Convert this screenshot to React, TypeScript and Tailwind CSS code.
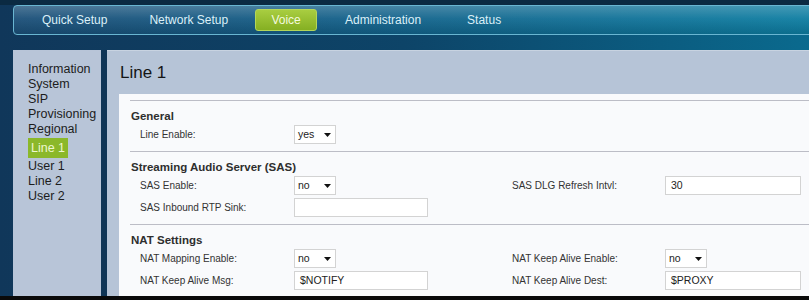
import type { ReactNode } from "react";

const sideItems = ["Information", "System", "SIP", "Provisioning", "Regional", "Line 1", "User 1", "Line 2", "User 2"];

export default function App() {
  return (
    <div className="h-[300px] w-[809px] overflow-hidden bg-[#0a0a0a] font-['Liberation_Sans',Arial,sans-serif]">
      <div className="flex h-[296px] flex-col bg-[linear-gradient(to_right,#10375a_0%,#0d4468_50%,#0a6a8e_100%)]">
        <div className="h-[5px] bg-[#0b2a42]" />
        <TopNav />
        <div className="h-[15px]" />
        <div className="flex min-h-0 flex-1">
          <Sidebar />
          <div className="w-[6px] bg-[#0f3556]" />
          <div className="flex min-w-0 flex-1 flex-col bg-[#b6c4d7]">
            <div className="h-[44px] border-t border-[#c8d3e1] pl-[13px] pt-[12px] text-[17px] leading-[20px] text-[#151515]">Line 1</div>
            <div className="ml-[12px] flex-1 bg-[#f9fafc] pl-[11px]">
              <div className="h-[6px]" />
              <Section title="General">
                <Row label="Line Enable:" field={<Select value="yes" />} />
              </Section>
              <Section title="Streaming Audio Server (SAS)">
                <Row label="SAS Enable:" field={<Select value="no" />} rightLabel="SAS DLG Refresh Intvl:" rightField={<Input wide value="30" />} />
                <Row label="SAS Inbound RTP Sink:" field={<Input value="" />} />
              </Section>
              <Section title="NAT Settings" last>
                <Row label="NAT Mapping Enable:" field={<Select value="no" />} rightLabel="NAT Keep Alive Enable:" rightField={<Select value="no" />} />
                <Row label="NAT Keep Alive Msg:" field={<Input value="$NOTIFY" />} rightLabel="NAT Keep Alive Dest:" rightField={<Input wide value="$PROXY" />} />
              </Section>
            </div>
          </div>
        </div>
      </div>
    </div>
  );
}

function TopNav() {
  return (
    <div className="-mr-[10px] ml-[13px] flex h-[30px] items-center rounded-[4px] border border-[#69b6d2] bg-[linear-gradient(to_bottom,rgba(255,255,255,0.22)_0%,rgba(255,255,255,0.05)_45%,rgba(0,0,0,0.12)_100%),linear-gradient(to_right,#1b4f78_0%,#135f88_40%,#0d7ea2_100%)] text-[12px] text-[#dcf0f8]">
      <span className="ml-[28px]">Quick Setup</span>
      <span className="ml-[42px]">Network Setup</span>
      <span className="ml-[27px] flex h-[22px] w-[62px] items-center justify-center rounded-[3px] border border-[#b4d65a] bg-[linear-gradient(to_bottom,#a8cd40,#85af22)] text-[#f4fadf]">Voice</span>
      <span className="ml-[28px]">Administration</span>
      <span className="ml-[46px]">Status</span>
    </div>
  );
}

function Sidebar() {
  return (
    <div className="ml-[13px] w-[88px] bg-[#b8c5d8] pl-[15px] pt-[12px] text-[12.5px] leading-[15px] text-[#1c1c1c]">
      {sideItems.map((item) =>
        item === "Line 1" ? (
          <div key={item} className="my-[1px] flex h-[20px] w-[40px] items-center bg-[#8bb82a] pl-[3px] text-[#eef7cf]">{item}</div>
        ) : (
          <div key={item}>{item}</div>
        )
      )}
    </div>
  );
}

function Section({ title, children, last }: { title: string; children: ReactNode; last?: boolean }) {
  return (
    <div className="border-t-[1.5px] border-[#bcbdc6] pt-[7px]">
      <div className="pl-px text-[11.5px] font-bold leading-[16px] text-[#2e2e2e]">{title}</div>
      <div className={`flex flex-col gap-[3px] pt-[1px] ${last ? "" : "pb-[7px]"}`}>{children}</div>
    </div>
  );
}

function Row({ label, field, rightLabel, rightField }: { label: string; field: ReactNode; rightLabel?: string; rightField?: ReactNode }) {
  return (
    <div className="flex h-[19px] items-center text-[10px] text-[#333]">
      <div className="w-[164px] pl-[10px]">{label}</div>
      <div className="w-[218px]">{field}</div>
      <div className="w-[153px]">{rightLabel}</div>
      <div>{rightField}</div>
    </div>
  );
}

function Select({ value }: { value: string }) {
  return (
    <div className="flex h-[19px] w-[42px] items-center justify-between border border-[#d3d3d3] bg-white pl-[3px] pr-[4px] text-[10.5px] text-[#222]">
      <span>{value}</span>
      <svg width="7" height="4" viewBox="0 0 7 4"><path d="M0 0h7L3.5 4z" fill="#111" /></svg>
    </div>
  );
}

function Input({ value, wide }: { value: string; wide?: boolean }) {
  return (
    <div className={`flex h-[19px] items-center border border-[#d3d3d3] bg-white pl-[5px] text-[10.5px] text-[#222] ${wide ? "w-[136px]" : "w-[134px]"}`}>{value}</div>
  );
}
